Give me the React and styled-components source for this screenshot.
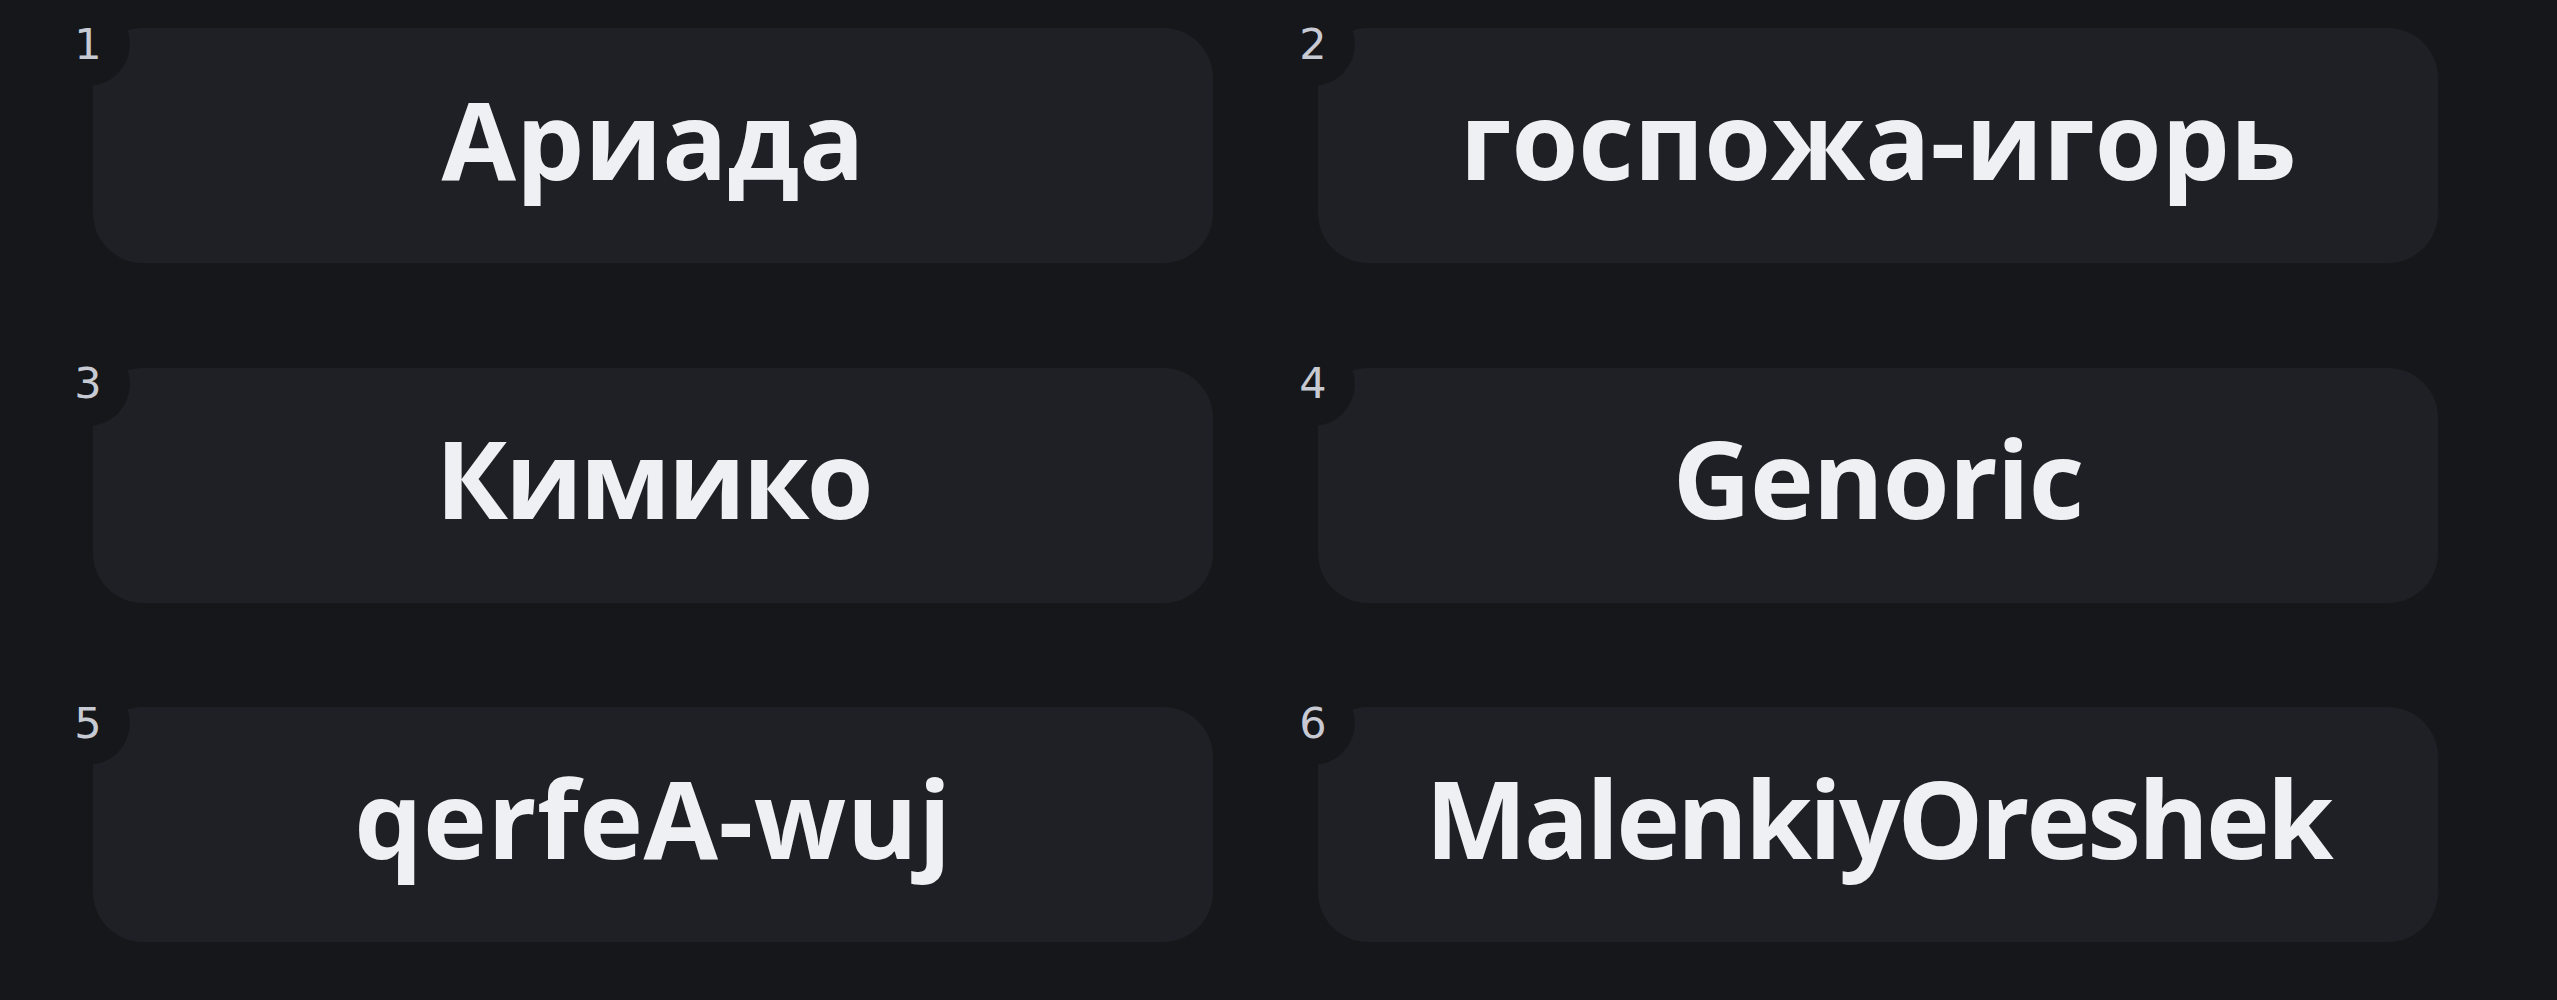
import React from "react";
import styled, { createGlobalStyle } from "styled-components";

const GlobalStyle = createGlobalStyle`
  html, body {
    margin: 0;
    padding: 0;
    background: #16171b;
  }
  body {
    font-family: "Open Sans", "Noto Sans", sans-serif;
  }
`;

const Page = styled.main`
  min-height: 1000px;
  box-sizing: border-box;
  padding: 28px 0 0 93px;
  background: #16171b;
`;

const Grid = styled.ol`
  list-style: none;
  margin: 0;
  padding: 0;
  display: grid;
  grid-template-columns: 1120px 1120px;
  grid-auto-rows: 235px;
  column-gap: 105px;
  row-gap: 104.5px;
`;

const Card = styled.li`
  position: relative;
  display: flex;
  align-items: center;
  justify-content: center;
  box-sizing: border-box;
  padding-bottom: 14px;
  background: #1f2026;
  border-radius: 50px;
`;

const Badge = styled.span`
  position: absolute;
  left: -47px;
  top: -26px;
  width: 84px;
  height: 84px;
  border-radius: 50%;
  background: #16171b;
  display: flex;
  align-items: center;
  justify-content: center;
  color: #c7cad3;
  font-family: "DejaVu Sans", "Noto Sans", sans-serif;
  font-size: 43px;
  line-height: 1;
`;

const Name = styled.span`
  color: #eff0f4;
  font-family: "Open Sans", "Noto Sans", sans-serif;
  font-weight: 700;
  font-size: 108px;
  line-height: 1;
  white-space: nowrap;
  letter-spacing: ${(p) => p.$tracking || "0px"};
`;

const players = [
  { name: "Ариада" },
  { name: "госпожа-игорь" },
  { name: "Кимико", tracking: "-3px" },
  { name: "Genoric", tracking: "-1px" },
  { name: "qerfeA-wuj", tracking: "0.5px" },
  { name: "MalenkiyOreshek", tracking: "-3px" },
];

export default function App() {
  return (
    <>
      <GlobalStyle />
      <Page>
        <Grid>
          {players.map((p, i) => (
            <Card key={p.name}>
              <Badge>{i + 1}</Badge>
              <Name $tracking={p.tracking}>{p.name}</Name>
            </Card>
          ))}
        </Grid>
      </Page>
    </>
  );
}
